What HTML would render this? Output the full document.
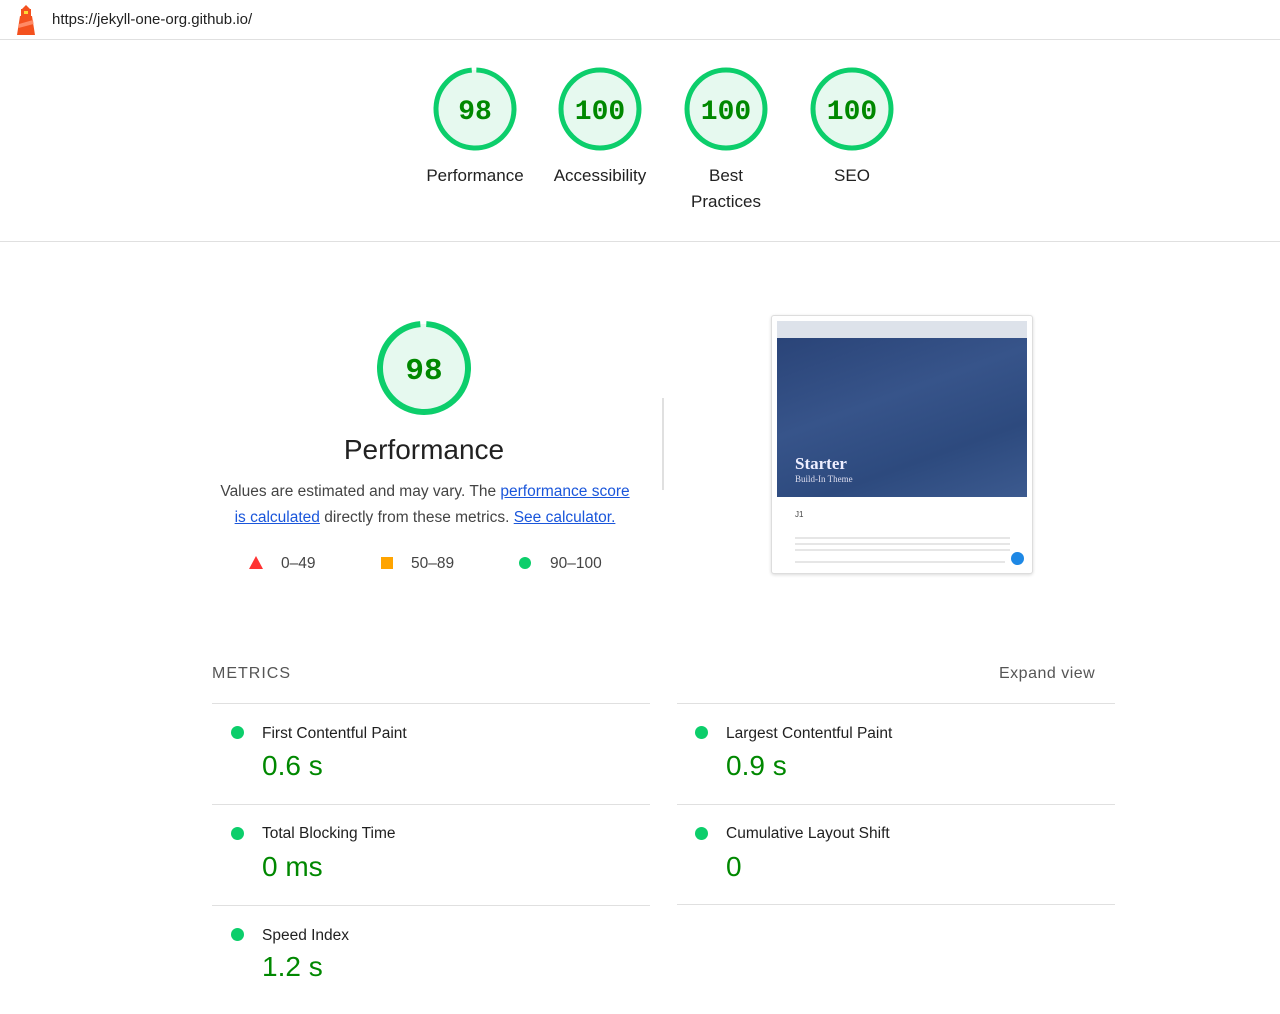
<!DOCTYPE html>
<html><head><meta charset="utf-8"><style>
*{margin:0;padding:0;box-sizing:border-box}
body{width:1280px;height:1014px;background:#fff;font-family:"Liberation Sans",Arial,sans-serif;position:relative;overflow:hidden;color:#212121}
.a{position:absolute}
.g text{font-family:"Liberation Mono",monospace;fill:#008800;font-weight:bold}
.lbl{font-size:17px;color:#212121;text-align:center;width:130px;line-height:26px}
.hr{height:1px;background:#e0e0e0}
.dot{width:13px;height:13px;border-radius:50%;background:#0cce6b}
.mt{font-size:15.5px;color:#212121}
.mv{font-size:28px;color:#008800}
a{color:#1a56db;text-decoration:underline}
</style></head><body>
<div class="a" style="left:0;top:0;width:1280px;height:40px;border-bottom:1px solid #e0e0e0"></div>
<svg class="a" style="left:14px;top:4px" width="24" height="32" viewBox="0 0 24 32">
<path d="M8 5 L12 1 L16 5 Z" fill="#f4511e"/><rect x="7" y="5" width="10" height="7" fill="#f4511e"/><rect x="10" y="7" width="4" height="3" fill="#fdd835"/>
<path d="M6 12 H18 L21 31 H3 Z" fill="#f4511e"/><path d="M5 20 L19 16 L19.6 20 L4.5 24Z" fill="#ff8a65"/></svg>
<div class="a" style="left:52px;top:11px;font-size:15px;color:#212121">https://jekyll-one-org.github.io/</div>

<svg class="a g" style="left:0;top:0" width="1280" height="240">
<g transform="translate(475,109)"><circle r="39" fill="#e6f9ef"/><circle r="39" fill="none" stroke="#0cce6b" stroke-width="5" stroke-dasharray="240 5" transform="rotate(-88)"/><text y="10" text-anchor="middle" font-size="28">98</text></g>
<g transform="translate(600,109)"><circle r="39" fill="#e6f9ef" stroke="#0cce6b" stroke-width="5"/><text y="10" text-anchor="middle" font-size="28">100</text></g>
<g transform="translate(726,109)"><circle r="39" fill="#e6f9ef" stroke="#0cce6b" stroke-width="5"/><text y="10" text-anchor="middle" font-size="28">100</text></g>
<g transform="translate(852,109)"><circle r="39" fill="#e6f9ef" stroke="#0cce6b" stroke-width="5"/><text y="10" text-anchor="middle" font-size="28">100</text></g>
</svg>
<div class="a lbl" style="left:410px;top:163px">Performance</div>
<div class="a lbl" style="left:535px;top:163px">Accessibility</div>
<div class="a lbl" style="left:661px;top:163px">Best<br>Practices</div>
<div class="a lbl" style="left:787px;top:163px">SEO</div>
<div class="a hr" style="left:0;top:241px;width:1280px"></div>

<svg class="a g" style="left:370px;top:314px" width="110" height="110">
<g transform="translate(54,54)"><circle r="44" fill="#e6f9ef"/><circle r="44" fill="none" stroke="#0cce6b" stroke-width="6" stroke-dasharray="270 6" transform="rotate(-87)"/><text y="11" text-anchor="middle" font-size="31">98</text></g></svg>
<div class="a" style="left:224px;top:434px;width:400px;text-align:center;font-size:28px">Performance</div>
<div class="a" style="left:210px;top:479px;width:430px;text-align:center;font-size:15.5px;line-height:26px;color:#444">Values are estimated and may vary. The <a>performance score</a><br><a>is calculated</a> directly from these metrics. <a>See calculator.</a></div>
<svg class="a" style="left:249px;top:556px" width="14" height="13"><path d="M7 0 L14 13 H0Z" fill="#ff3333"/></svg>
<div class="a" style="left:281px;top:555px;font-size:15.5px;color:#444">0–49</div>
<div class="a" style="left:381px;top:557px;width:12px;height:12px;background:#ffa400"></div>
<div class="a" style="left:411px;top:555px;font-size:15.5px;color:#444">50–89</div>
<div class="a dot" style="left:519px;top:557px;width:12px;height:12px"></div>
<div class="a" style="left:550px;top:555px;font-size:15.5px;color:#444">90–100</div>
<div class="a" style="left:662px;top:398px;width:2px;height:92px;background:#e0e0e0"></div>

<div class="a" style="left:771px;top:315px;width:262px;height:259px;border:1px solid #ddd;border-radius:3px;background:#fff;box-shadow:0 1px 3px rgba(0,0,0,.15)"></div>
<div class="a" style="left:777px;top:321px;width:250px;height:17px;background:#dde2ea"></div>
<div class="a" style="left:777px;top:338px;width:250px;height:159px;background:linear-gradient(160deg,#2a4478 0%,#37548a 40%,#2d4a7e 70%,#3c5a8f 100%)"></div>
<div class="a" style="left:795px;top:454px;font-family:'Liberation Serif',serif;font-weight:bold;font-size:17px;color:#eef">Starter</div>
<div class="a" style="left:795px;top:474px;font-family:'Liberation Serif',serif;font-size:9px;color:#dde">Build-In Theme</div>
<div class="a" style="left:795px;top:510px;font-size:8px;color:#444">J1</div>
<div class="a" style="left:795px;top:537px;width:215px;height:2px;background:#e6e6e6"></div>
<div class="a" style="left:795px;top:543px;width:215px;height:2px;background:#e6e6e6"></div>
<div class="a" style="left:795px;top:549px;width:215px;height:2px;background:#e6e6e6"></div>
<div class="a" style="left:795px;top:561px;width:210px;height:2px;background:#e6e6e6"></div>
<div class="a" style="left:1011px;top:552px;width:13px;height:13px;border-radius:50%;background:#1e88e5"></div>

<div class="a" style="left:212px;top:665px;font-size:16px;letter-spacing:1px;color:#555">METRICS</div>
<div class="a" style="left:999px;top:665px;font-size:16px;letter-spacing:.5px;color:#555">Expand view</div>
<div class="a hr" style="left:212px;top:703px;width:438px"></div>
<div class="a hr" style="left:677px;top:703px;width:438px"></div>
<div class="a hr" style="left:212px;top:804px;width:438px"></div>
<div class="a hr" style="left:677px;top:804px;width:438px"></div>
<div class="a hr" style="left:212px;top:905px;width:438px"></div>
<div class="a hr" style="left:677px;top:904px;width:438px"></div>

<div class="a dot" style="left:231px;top:726px"></div><div class="a mt" style="left:262px;top:725px">First Contentful Paint</div><div class="a mv" style="left:262px;top:750px">0.6 s</div>
<div class="a dot" style="left:695px;top:726px"></div><div class="a mt" style="left:726px;top:725px">Largest Contentful Paint</div><div class="a mv" style="left:726px;top:750px">0.9 s</div>
<div class="a dot" style="left:231px;top:827px"></div><div class="a mt" style="left:262px;top:825px">Total Blocking Time</div><div class="a mv" style="left:262px;top:851px">0 ms</div>
<div class="a dot" style="left:695px;top:827px"></div><div class="a mt" style="left:726px;top:825px">Cumulative Layout Shift</div><div class="a mv" style="left:726px;top:851px">0</div>
<div class="a dot" style="left:231px;top:928px"></div><div class="a mt" style="left:262px;top:927px">Speed Index</div><div class="a mv" style="left:262px;top:951px">1.2 s</div>
</body></html>
